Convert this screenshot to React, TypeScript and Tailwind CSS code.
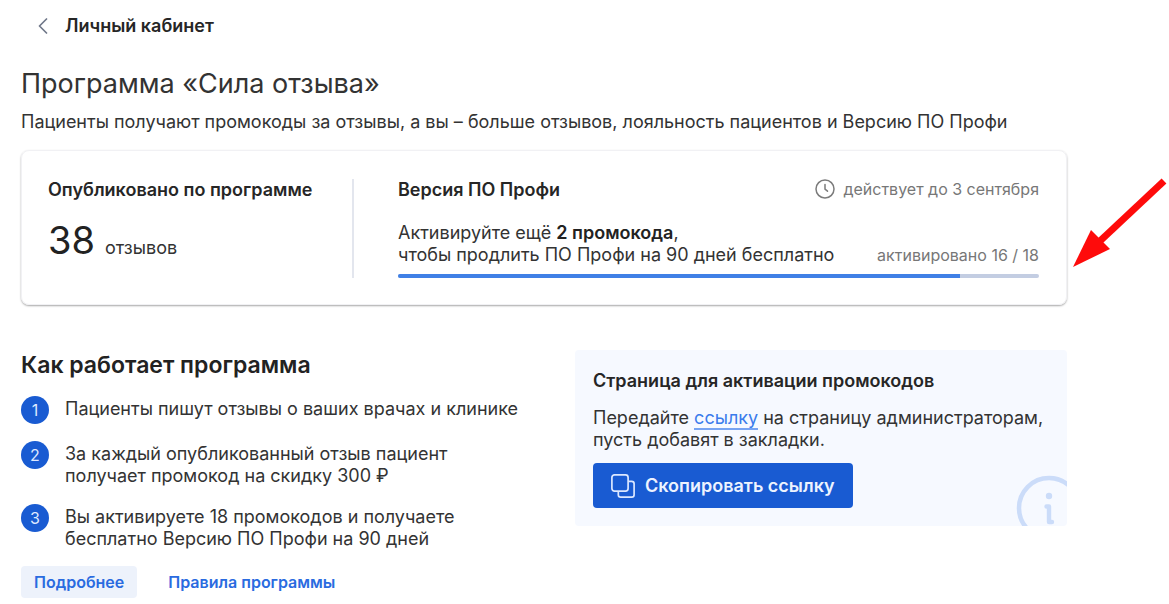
import React from "react";

const steps: { lines: string[] }[] = [
  { lines: ["Пациенты пишут отзывы о ваших врачах и клинике"] },
  { lines: ["За каждый опубликованный отзыв пациент", "получает промокод на скидку 300 ₽"] },
  { lines: ["Вы активируете 18 промокодов и получаете", "бесплатно Версию ПО Профи на 90 дней"] },
];

const program = { activated: 16, required: 18, percent: 87.6 };

function ChevronLeft() {
  return (
    <svg className="h-4 w-3" viewBox="0 0 12 16" fill="none" stroke="#70788a" strokeWidth="1.7" strokeLinecap="round" strokeLinejoin="round" aria-hidden="true">
      <path d="M9.5 1 2.5 8l7 7" />
    </svg>
  );
}

function ClockIcon() {
  return (
    <svg className="h-5 w-5" viewBox="0 0 20 20" fill="none" stroke="#7b7b7b" strokeWidth="1.5" strokeLinecap="round" strokeLinejoin="round" aria-hidden="true">
      <circle cx="10" cy="10" r="9" />
      <path d="M10 5.5v4.7l2.5 2" />
    </svg>
  );
}

function CopyIcon() {
  return (
    <svg className="h-6 w-6" viewBox="0 0 24 24" fill="none" stroke="#dbe7ff" strokeWidth="1.7" strokeLinejoin="round" aria-hidden="true">
      <rect x="0.9" y="0.9" width="16.2" height="16.2" rx="2.6" />
      <path d="M17.1 7.3h3.6a2.4 2.4 0 0 1 2.4 2.4v11a2.4 2.4 0 0 1-2.4 2.4h-11a2.4 2.4 0 0 1-2.4-2.4v-3.6" />
    </svg>
  );
}

function InfoMark() {
  return (
    <svg className="absolute right-0 bottom-0 h-[52px] w-[52px]" viewBox="0 0 52 52" fill="none" stroke="#cbdcf9" aria-hidden="true">
      <circle cx="34" cy="34" r="30" strokeWidth="4.5" />
      <circle cx="34" cy="22" r="3.2" fill="#cbdcf9" stroke="none" />
      <path d="M31.5 32.5H34v15.3M34 48h3" strokeWidth="4.4" strokeLinecap="round" strokeLinejoin="round" />
    </svg>
  );
}

function PointerArrow() {
  return (
    <svg className="pointer-events-none absolute top-6 left-full h-24 w-[102px]" viewBox="0 0 102 96" aria-hidden="true">
      <path d="M98 6 34 66" stroke="#fe0b0b" strokeWidth="7" />
      <path d="M7 92 25 55 44 74Z" fill="#fe0b0b" />
    </svg>
  );
}

export default function App() {
  return (
    <main className="min-h-screen bg-white pt-3 pr-[102px] pb-1 pl-[21px] font-['Inter','Liberation_Sans',sans-serif] text-lg leading-[22px] text-[#333333]">
      <nav className="pl-4">
        <a href="#account" className="inline-flex items-center gap-4 leading-7 font-semibold text-[#262626]">
          <ChevronLeft />
          Личный кабинет
        </a>
      </nav>

      <h1 className="mt-6 text-[27px] leading-10">Программа «Сила отзыва»</h1>
      <p className="mt-1 leading-7">
        Пациенты получают промокоды за отзывы, а вы – больше отзывов, лояльность пациентов и Версию ПО Профи
      </p>

      <section className="relative mt-3.5 flex rounded-lg border border-[#f1f1f4] pt-7 pr-[27px] pb-[26px] pl-[26px] shadow-[0_1px_2px_rgba(0,0,0,0.35)]">
        <div className="w-[306px] shrink-0 border-r-2 border-[#e3e6ee]">
          <h2 className="font-semibold text-[#262626]">Опубликовано по программе</h2>
          <p className="mt-4 flex items-baseline gap-2.5">
            <span className="text-[38px] leading-[46px] text-[#222222]">38</span>
            <span>отзывов</span>
          </p>
        </div>
        <div className="min-w-0 grow pl-11">
          <div className="flex items-start justify-between">
            <h2 className="font-semibold text-[#262626]">Версия ПО Профи</h2>
            <p className="flex items-center gap-2 text-base leading-5 text-[#777777]">
              <ClockIcon />
              действует до 3 сентября
            </p>
          </div>
          <div className="mt-[21px] flex items-end justify-between">
            <p>
              Активируйте ещё <b className="font-semibold text-[#222222]">2 промокода</b>,<br />
              чтобы продлить ПО Профи на 90 дней бесплатно
            </p>
            <p className="text-base leading-[22px] text-[#777777]">активировано {program.activated} / {program.required}</p>
          </div>
          <div
            role="progressbar"
            aria-valuenow={program.activated}
            aria-valuemin={0}
            aria-valuemax={program.required}
            aria-label="Активировано промокодов"
            className="mt-2 h-1 overflow-hidden rounded-full bg-[#c3cde2]"
          >
            <div className="h-full bg-[#4080e6]" style={{ width: `${program.percent}%` }} />
          </div>
        </div>
        <PointerArrow />
      </section>

      <div className="mt-[45px] flex items-start justify-between">
        <section>
          <h2 className="text-[23px] leading-[30px] font-semibold text-[#222222]">Как работает программа</h2>
          <ol className="mt-4 flex flex-col gap-[17px]">
            {steps.map((step, i) => (
              <li key={i} className="flex gap-4">
                <span className="flex h-7 w-7 shrink-0 items-center justify-center rounded-full bg-[#195bd2] text-base text-[#dfe9ff]">
                  {i + 1}
                </span>
                <p className="pt-0.5">
                  {step.lines.map((line) => (
                    <span key={line} className="block">{line}</span>
                  ))}
                </p>
              </li>
            ))}
          </ol>
          <div className="mt-4 flex items-center gap-[18px] text-base font-semibold text-[#2a6be0]">
            <button type="button" className="h-8 rounded bg-[#edf2fb] px-[13px]">Подробнее</button>
            <a href="#rules" className="px-[13px]">Правила программы</a>
          </div>
        </section>

        <aside className="relative w-[492px] shrink-0 overflow-hidden rounded bg-[#f6f9ff] pt-5 pb-[18px] pl-[18px]">
          <h2 className="font-semibold text-[#262626]">Страница для активации промокодов</h2>
          <p className="mt-[15px]">
            Передайте{" "}
            <a href="#activation" className="border-b-2 border-[#76a3f2] text-[#3b7cec]">ссылку</a>{" "}
            на страницу администраторам,<br />
            пусть добавят в закладки.
          </p>
          <button type="button" className="mt-3 flex h-[45px] items-center gap-2.5 rounded bg-[#195bd2] px-[18px] font-semibold text-[#edf3ff]">
            <CopyIcon />
            Скопировать ссылку
          </button>
          <InfoMark />
        </aside>
      </div>
    </main>
  );
}
